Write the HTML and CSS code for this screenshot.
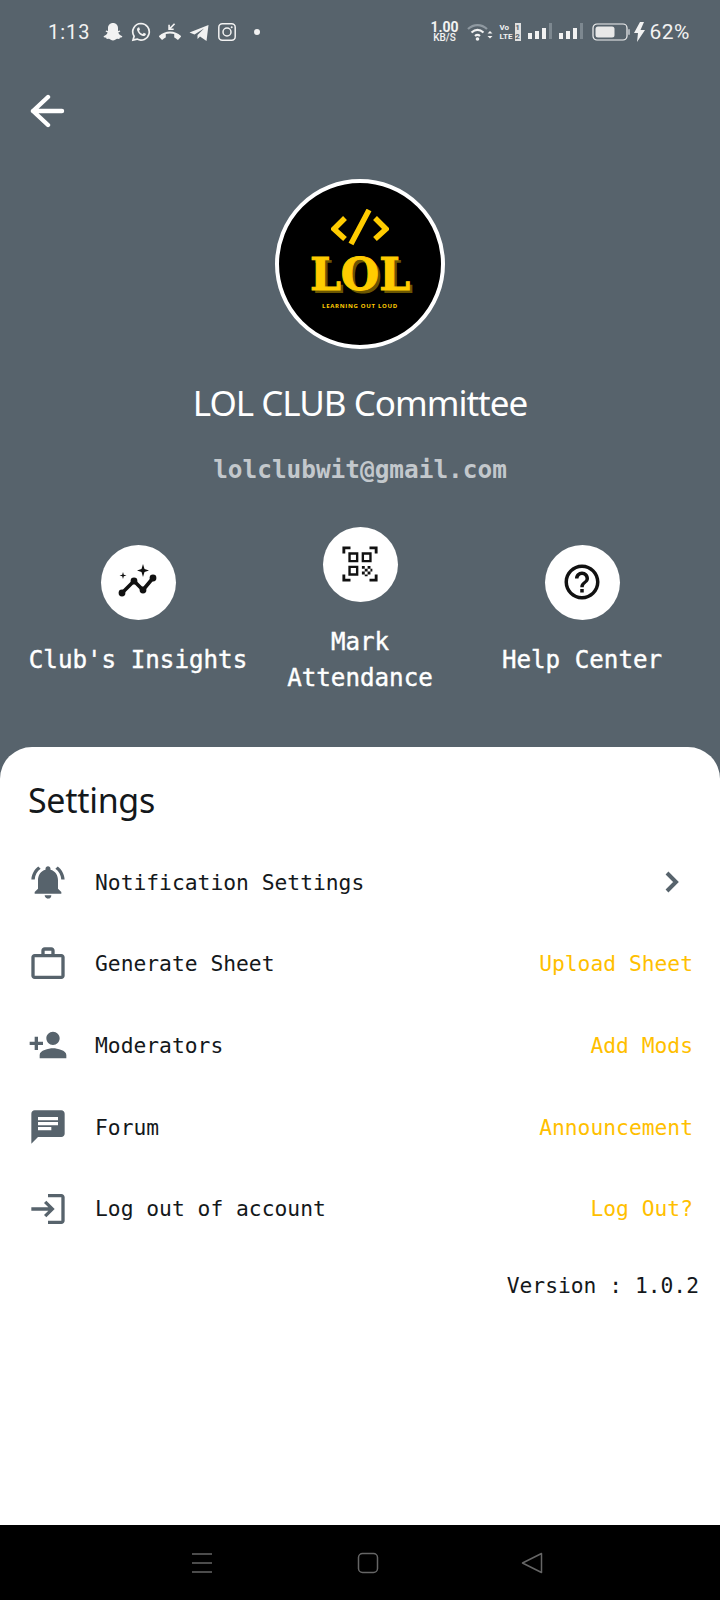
FILE: index.html
```html
<!DOCTYPE html>
<html lang="en">
<head>
    <meta charset="UTF-8">
    <meta name="viewport" content="width=device-width, initial-scale=1.0">
    <title>LOL CLUB Committee</title>
    <link rel="stylesheet" href="styles.css">
</head>
<body>
    <div class="page">
        <header class="header">
            <div class="status-bar">
                <div class="status-left">
                    <span class="time">1:13</span>
                    <svg class="status-icon" viewBox="0 0 20 20"><path fill="#f2f2f2" d="M10 1c3 0 5 2.200 5 5v3l1.800-.4.500 1-2 1c.5 1.800 2 3 4 3.600l-.3 1-2.200.5-.5 1.300-2.300-.2c-1.300.3-2.300 1.700-4 1.700s-2.700-1.400-4-1.700l-2.300.2-.5-1.300L.9 15.200l-.3-1c2-.6 3.500-1.800 4-3.600l-2-1 .5-1L5 9V6c0-2.800 2-5 5-5z"/></svg>
                    <svg class="status-icon" viewBox="0 0 20 20"><path fill="none" stroke="#f2f2f2" stroke-width="1.700" d="M10 1.500a8.300 8.300 0 1 1-4 15.600l-4 1 1.100-3.800A8.300 8.300 0 0 1 10 1.500z"/><path fill="#f2f2f2" d="M7.200 5.600c-.8.400-1.500 1.500-1 3 .8 2.500 3 4.800 5.700 5.400 1.500.300 2.700-.5 3-1.500l-.1-.8-2-1-.8 1c-.3.300-.6.300-1 .1-1.200-.6-2.200-1.500-2.800-2.800-.1-.3 0-.6.200-.8l.6-.8-.9-2.200z"/></svg>
                    <svg class="status-icon wide" viewBox="0 0 24 20"><path fill="#f2f2f2" transform="translate(0 4.500)" d="M12 7c-1.600 0-3.150.25-4.600.72v3.100c0 .39-.23.74-.56.9-.98.49-1.870 1.120-2.660 1.850-.18.18-.43.28-.7.28-.28 0-.53-.11-.71-.29L.29 11.080c-.18-.17-.29-.42-.29-.7 0-.28.11-.53.29-.71C3.340 6.780 7.460 5 12 5s8.660 1.780 11.710 4.670c.18.18.29.43.29.71 0 .28-.11.53-.29.71l-2.480 2.480c-.18.18-.43.29-.71.29-.27 0-.52-.11-.7-.28-.79-.74-1.690-1.360-2.670-1.850-.33-.16-.56-.5-.56-.9v-3.100C15.150 7.250 13.600 7 12 7z"/><path fill="none" stroke="#f2f2f2" stroke-width="1.800" d="M17 1l-5.500 5.500M11 2v5h5"/></svg>
                    <svg class="status-icon" viewBox="0 0 20 20"><path fill="#f2f2f2" d="M.5 10.500L19.500 3l-2 16-6.500-4.500-2.500 2.500v-4L15 6.500 5.500 12.500z"/></svg>
                    <svg class="status-icon" viewBox="0 0 20 20"><rect x="1.800" y="1.800" width="16.400" height="16.400" rx="3.500" fill="none" stroke="#f2f2f2" stroke-width="1.500"/><circle cx="10" cy="10" r="4" fill="none" stroke="#f2f2f2" stroke-width="1.500"/><circle cx="14.700" cy="5.300" r="1" fill="#f2f2f2"/></svg>
                    <span class="status-dot"></span>
                </div>
                <div class="status-right">
                    <div class="speed"><span>1.00</span><span class="speed-unit">KB/S</span></div>
                    <svg class="wifi" viewBox="0 0 26 20"><path fill="none" stroke="#8f99a1" stroke-width="2.200" d="M1 7c5.500-5.300 13.500-5.300 19 0"/><path fill="none" stroke="#f2f2f2" stroke-width="2.200" d="M4.500 10.500c3.700-3.300 8.300-3.300 12 0M8 14c1.800-1.500 3.200-1.500 5 0"/><circle cx="10.500" cy="17" r="1.800" fill="#f2f2f2"/><path fill="#f2f2f2" d="M20.500 11.500h5l-2.500-2.500zM20.500 14h5L23 16.500z"/></svg>
                    <div class="volte">
                        <div class="volte-line"><span>Vo</span><span class="sim">1</span></div>
                        <div class="volte-line"><span>LTE</span><span class="sim">2</span></div>
                    </div>
                    <svg class="signal" viewBox="0 0 24 20"><path fill="#f2f2f2" d="M0 11h4v6H0zM7 9h4v8H7zM14 6h4v11h-4z"/><path fill="#7d8890" d="M21 1h3v16h-3z"/></svg>
                    <svg class="signal" viewBox="0 0 24 20"><path fill="#f2f2f2" d="M0 11h4v6H0zM7 9h4v8H7zM14 6h4v11h-4z"/><path fill="#7d8890" d="M21 1h3v16h-3z"/></svg>
                    <svg class="battery" viewBox="0 0 38 18"><rect x="1" y="1" width="34" height="16" rx="4" fill="none" stroke="#f2f2f2" stroke-width="1.200"/><rect x="3.500" y="3.500" width="19" height="11" rx="2.500" fill="#e8e8e8"/><rect x="36" y="6" width="2" height="6" rx="1" fill="#aab1b7"/></svg>
                    <svg class="bolt" viewBox="0 0 11 20"><path fill="#f2f2f2" d="M6 0L0 11h4l-1 9 8-12H6.500L10 0z"/></svg>
                    <span class="battery-text">62%</span>
                </div>
            </div>

            <svg class="back" viewBox="0 0 36 36"><path fill="none" stroke="#fff" stroke-width="4.400" stroke-linecap="round" stroke-linejoin="round" d="M32 17H3M18 3L3 17l15 14"/></svg>

            <div class="logo">
                <svg class="logo-code" viewBox="0 0 58 37"><path fill="none" stroke="#ffcc00" stroke-width="5.500" d="M14 9L3 20l11 10M44 9l11 11-11 10M38 1L20 35"/></svg>
                <span class="logo-name">LOL</span>
                <span class="logo-tag">LEARNING OUT LOUD</span>
            </div>

            <h1 class="club-name">LOL CLUB Committee</h1>
            <p class="club-mail">lolclubwit@gmail.com</p>

            <div class="actions">
                <div class="action">
                    <div class="action-circle">
                        <svg class="action-icon" viewBox="0 0 40 40"><path fill="none" stroke="#111" stroke-width="3.600" d="M4 31l12-12 9 9 10-12"/><circle cx="4" cy="31" r="3.400" fill="#111"/><circle cx="16" cy="19" r="3.400" fill="#111"/><circle cx="25" cy="28" r="3.400" fill="#111"/><circle cx="35" cy="16" r="3.400" fill="#111"/><path fill="#111" d="M25 2l1.500 5 4.500 1.500-4.500 1.500L25 15l-1.500-5-4.500-1.500L23.500 7zM5 10l.8 2.700 2.700.8-2.700.8L5 17l-.8-2.700-2.700-.8 2.700-.8z"/></svg>
                    </div>
                    <span class="action-label">Club's Insights</span>
                </div>
                <div class="action">
                    <div class="action-circle">
                        <svg class="qr-icon" viewBox="0 0 40 40"><path fill="none" stroke="#111" stroke-width="3" d="M3 9V3h7M30 3h7v6M3 31v6h7M37 31v6h-7"/><path fill="none" stroke="#111" stroke-width="2.500" d="M9 9h8v8H9zM23 9h8v8h-8zM9 23h8v8H9z"/><path fill="#111" d="M22 22h3v3h-3zM28 22h3v3h-3zM25 25h3v3h-3zM31 25h2v3h-2zM22 28h3v3h-3zM28 28h3v3h-3zM25 31h3v2h-3z"/></svg>
                    </div>
                    <span class="action-label">Mark<br>Attendance</span>
                </div>
                <div class="action">
                    <div class="action-circle">
                        <svg class="help-icon" viewBox="0 0 24 24"><path fill="#111" d="M11 18h2v-2h-2v2zm1-16C6.480 2 2 6.480 2 12s4.480 10 10 10 10-4.480 10-10S17.520 2 12 2zm0 18c-4.410 0-8-3.590-8-8s3.590-8 8-8 8 3.590 8 8-3.590 8-8 8zm0-14c-2.210 0-4 1.790-4 4h2c0-1.100.9-2 2-2s2 .9 2 2c0 2-3 1.750-3 5h2c0-2.250 3-2.500 3-5 0-2.210-1.790-4-4-4z"/></svg>
                    </div>
                    <span class="action-label">Help Center</span>
                </div>
            </div>
        </header>

        <main class="sheet">
            <h2 class="sheet-title">Settings</h2>

            <div class="row">
                <svg class="row-icon" viewBox="0 0 24 24"><path d="M7.580 4.080L6.150 2.650C3.750 4.480 2.170 7.300 2.030 10.500h2c.15-2.650 1.510-4.970 3.550-6.420zm12.390 6.420h2c-.15-3.200-1.730-6.020-4.120-7.850l-1.420 1.430c2.020 1.450 3.390 3.770 3.540 6.420zM18 11c0-3.070-1.640-5.640-4.500-6.320V4c0-.83-.67-1.500-1.500-1.500s-1.500.67-1.500 1.500v.68C7.630 5.360 6 7.920 6 11v5l-2 2v1h16v-1l-2-2v-5zm-6 11c.14 0 .27-.01.4-.04.65-.14 1.180-.58 1.440-1.180.1-.24.15-.5.15-.78h-4c.01 1.100.9 2 2.010 2z"/></svg>
                <span class="row-text">Notification Settings</span>
                <svg class="chevron" viewBox="0 0 14 22"><path fill="none" stroke="#57636c" stroke-width="4" d="M2 2l9 9-9 9"/></svg>
            </div>
            <div class="row">
                <svg class="row-icon" viewBox="0 0 24 24"><path d="M20 6h-4V4c0-1.110-.89-2-2-2h-4c-1.110 0-2 .89-2 2v2H4c-1.110 0-1.990.89-1.990 2L2 19c0 1.110.89 2 2 2h16c1.110 0 2-.89 2-2V8c0-1.110-.89-2-2-2zm-6 0h-4V4h4v2zm6 13H4V8h16v11z"/></svg>
                <span class="row-text">Generate Sheet</span>
                <span class="row-link">Upload Sheet</span>
            </div>
            <div class="row">
                <svg class="row-icon" viewBox="0 0 24 24"><path d="M15 12c2.210 0 4-1.790 4-4s-1.790-4-4-4-4 1.790-4 4 1.790 4 4 4zm-9-2V7H4v3H1v2h3v3h2v-3h3v-2H6zm9 4c-2.670 0-8 1.340-8 4v2h16v-2c0-2.660-5.330-4-8-4z"/></svg>
                <span class="row-text">Moderators</span>
                <span class="row-link">Add Mods</span>
            </div>
            <div class="row">
                <svg class="row-icon" viewBox="0 0 24 24"><path d="M20 2H4c-1.100 0-1.990.9-1.990 2L2 22l4-4h14c1.100 0 2-.9 2-2V4c0-1.100-.9-2-2-2zM6 9h12v2H6V9zm8 5H6v-2h8v2zm4-6H6V6h12v2z"/></svg>
                <span class="row-text">Forum</span>
                <span class="row-link">Announcement</span>
            </div>
            <div class="row">
                <svg class="row-icon" viewBox="0 0 24 24"><path d="M11 7L9.600 8.400l2.600 2.600H2v2h10.200l-2.600 2.600L11 17l5-5-5-5zm9 12h-8v2h8c1.100 0 2-.9 2-2V5c0-1.100-.9-2-2-2h-8v2h8v14z"/></svg>
                <span class="row-text">Log out of account</span>
                <span class="row-link">Log Out?</span>
            </div>

            <p class="version">Version : 1.0.2</p>
        </main>

        <nav class="nav-bar">
            <svg class="nav-icon" viewBox="0 0 22 22"><path fill="none" stroke="#666" stroke-width="1.500" d="M1 2h20M1 11h20M1 20h20"/></svg>
            <svg class="nav-icon" viewBox="0 0 22 22"><rect x="1.500" y="1.500" width="19" height="19" rx="4" fill="none" stroke="#666" stroke-width="1.500"/></svg>
            <svg class="nav-icon nav-back" viewBox="0 0 22 22"><path fill="none" stroke="#666" stroke-width="1.500" stroke-linejoin="round" d="M20.500 1.500v19L1.500 11z"/></svg>
        </nav>
    </div>
</body>
</html>
```

FILE: styles.css
```css
* {
    box-sizing: border-box;
}

body {
    margin: 0;
    padding: 0;
    background-color: #57636c;
    font-family: "DejaVu Sans Mono", monospace;
}

.page {
    width: 720px;
    height: 1600px;
    display: flex;
    flex-direction: column;
    overflow: hidden;
}

/* top part */
.header {
    height: 747px;
    display: flex;
    flex-direction: column;
    flex-shrink: 0;
    color: #fff;
}

.status-bar {
    height: 64px;
    display: flex;
    justify-content: space-between;
    align-items: center;
    padding: 0 30px 0 48px;
}

.status-left,
.status-right {
    display: flex;
    align-items: center;
}

.status-left {
    gap: 8px;
}

.time {
    width: 47px;
    font-family: Roboto, sans-serif;
    font-size: 20px;
    letter-spacing: 1px;
    color: #f2f2f2;
}

.status-icon {
    width: 20px;
    height: 20px;
}

.status-icon.wide {
    width: 22px;
}

.status-dot {
    width: 6px;
    height: 6px;
    margin-left: 9px;
    border-radius: 50%;
    background-color: #f2f2f2;
}

.status-right {
    gap: 7px;
    color: #f2f2f2;
}

.speed {
    display: flex;
    flex-direction: column;
    align-items: center;
    width: 30px;
    font-family: Roboto, sans-serif;
    font-size: 14px;
    font-weight: 700;
    line-height: 11px;
}

.speed-unit {
    font-size: 10px;
    font-weight: 500;
    line-height: 9px;
}

.wifi {
    width: 26px;
    height: 20px;
}

.volte {
    width: 21px;
    font-family: Roboto, sans-serif;
    font-size: 8px;
    font-weight: 700;
    line-height: 9px;
}

.volte-line {
    display: flex;
    justify-content: space-between;
}

.sim {
    width: 6px;
    text-align: center;
    background-color: #e0e0e0;
    color: #57636c;
}

.signal {
    width: 24px;
    height: 20px;
}

.battery {
    width: 38px;
    height: 18px;
    margin-left: 2px;
}

.bolt {
    width: 11px;
    height: 20px;
    margin-left: -3px;
}

.battery-text {
    margin-left: -2px;
    font-family: Roboto, sans-serif;
    font-size: 21px;
    letter-spacing: .5px;
}

.back {
    width: 36px;
    height: 36px;
    margin: 30px 0 0 30px;
}

.logo {
    width: 170px;
    height: 170px;
    margin: 49px auto 0;
    display: flex;
    flex-direction: column;
    align-items: center;
    border: 4px solid #fff;
    border-radius: 50%;
    background-color: #000;
    color: #ffcc00;
}

.logo-code {
    width: 58px;
    height: 37px;
    margin-top: 26px;
    flex-shrink: 0;
}

.logo-name {
    margin-top: 7px;
    font-family: "DejaVu Serif", serif;
    font-size: 44px;
    font-weight: 700;
    line-height: 44px;
    letter-spacing: 0;
    -webkit-text-stroke: 1px #ffcc00;
    text-shadow: 3px 3px 0 #6b5600;
}

.logo-tag {
    margin-top: 5px;
    font-family: "Open Sans", sans-serif;
    font-size: 6px;
    font-weight: 700;
    line-height: 8px;
    letter-spacing: .7px;
    white-space: nowrap;
}

.club-name {
    margin: 32px 0 0;
    font-family: "Noto Sans", sans-serif;
    font-size: 35px;
    font-weight: 400;
    line-height: 44px;
    letter-spacing: -1px;
    text-align: center;
}

.club-mail {
    margin: 30px 0 0;
    font-size: 24.400px;
    font-weight: 700;
    line-height: 30px;
    text-align: center;
    color: #c3c8cc;
}

.actions {
    display: flex;
    align-items: center;
    padding: 0 27px;
    margin-top: 41.500px;
}

.action {
    flex: 1 1 0;
    display: flex;
    flex-direction: column;
    align-items: center;
    gap: 22px;
}

.action-circle {
    width: 75px;
    height: 75px;
    display: flex;
    justify-content: center;
    align-items: center;
    border-radius: 50%;
    background-color: #fff;
}

.action-icon {
    width: 40px;
    height: 40px;
}

.qr-icon {
    width: 38px;
    height: 38px;
}

.help-icon {
    width: 42px;
    height: 42px;
}

.action-label {
    font-size: 24.200px;
    line-height: 36px;
    text-align: center;
    white-space: nowrap;
    color: #fff;
    -webkit-text-stroke: .4px #fff;
}

/* white part */
.sheet {
    flex: 1;
    padding: 28px 0 0;
    background-color: #fff;
    border-radius: 32px 32px 0 0;
}

.sheet-title {
    margin: 0 0 16.500px;
    padding-left: 28px;
    font-family: "Noto Sans", sans-serif;
    font-size: 34px;
    font-weight: 400;
    line-height: 50px;
    letter-spacing: -.3px;
    color: #14181b;
}

.row {
    height: 81.600px;
    display: flex;
    align-items: center;
    padding: 0 27px 0 28px;
}

.row-icon {
    width: 40px;
    height: 40px;
    flex-shrink: 0;
    margin-right: 27px;
    fill: #57636c;
}

.row-text {
    flex: 1;
    font-size: 21.300px;
    color: #14181b;
}

.row-link {
    font-size: 21.300px;
    color: #ffbf00;
}

.chevron {
    width: 14px;
    height: 22px;
    margin-right: 14px;
}

.version {
    margin: 20px 21px 0 0;
    font-size: 21.300px;
    line-height: 34px;
    text-align: right;
    color: #14181b;
}

.nav-bar {
    height: 75px;
    flex-shrink: 0;
    display: flex;
    align-items: center;
    gap: 144px;
    padding-left: 191px;
    background-color: #000;
}

.nav-icon {
    width: 22px;
    height: 22px;
}

.nav-back {
    margin-left: -2px;
}
```
